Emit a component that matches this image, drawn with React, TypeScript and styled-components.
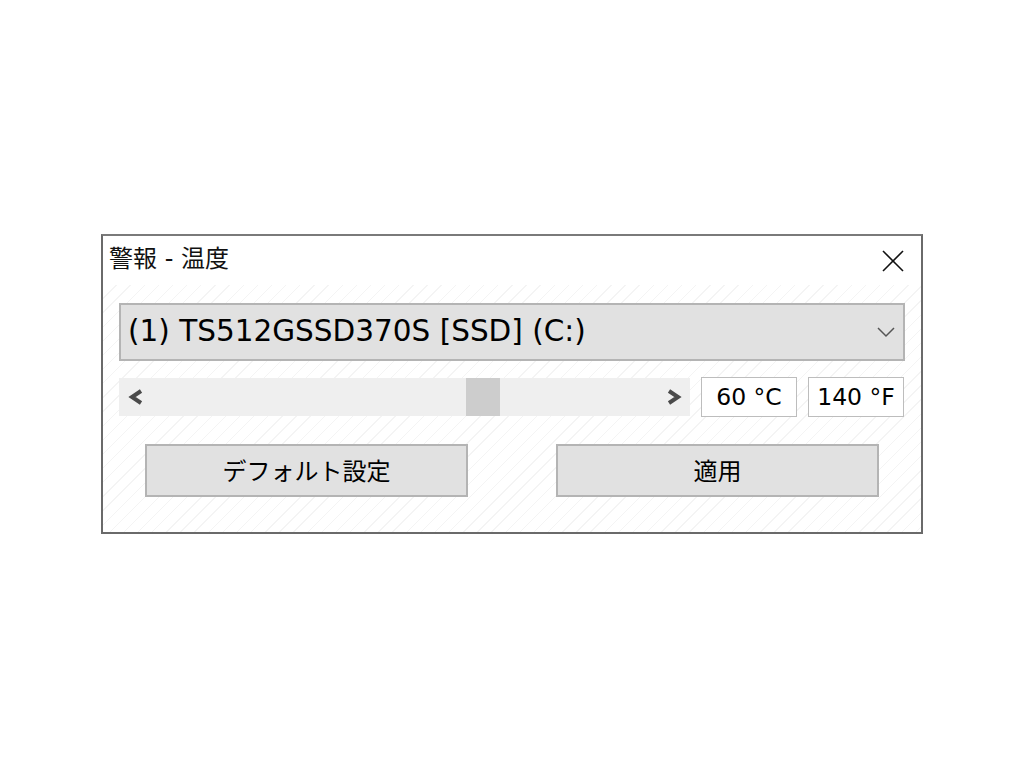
import React from "react";
import styled, { createGlobalStyle } from "styled-components";

const Global = createGlobalStyle`
  html, body { margin: 0; padding: 0; background: #ffffff; }
  body { font-family: "DejaVu Sans", "Noto Sans CJK JP", sans-serif; color: #000; }
`;

const Page = styled.div`
  width: 1024px;
  height: 768px;
  box-sizing: border-box;
  padding: 234px 0 0 101px;
`;

const Window = styled.div`
  width: 822px;
  height: 300px;
  box-sizing: border-box;
  border: 2px solid #6a6a6a;
  border-top-color: #7a7a7a;
  background: #ffffff;
  display: flex;
  flex-direction: column;
`;

const TitleBar = styled.div`
  height: 49px;
  display: flex;
  align-items: center;
  justify-content: space-between;
  padding: 0 16px 4px 6px;
  box-sizing: border-box;
`;

const Title = styled.div`
  font-family: "DejaVu Sans", "Noto Sans CJK JP", sans-serif;
  font-size: 24px;
  line-height: 1;
  color: #111;
`;

const CloseButton = styled.div`
  width: 24px;
  height: 24px;
  display: flex;
  align-items: center;
  justify-content: center;
  margin-top: 4px;
`;

const Client = styled.div`
  flex: 1;
  padding: 18px 16px 0 16px;
  display: flex;
  flex-direction: column;
  background-color: #ffffff;
  background-image: repeating-linear-gradient(
    135deg,
    #ffffff 0px,
    #ffffff 9px,
    #f4f4f4 9px,
    #f4f4f4 10px
  );
`;

const Combo = styled.div`
  height: 58px;
  box-sizing: border-box;
  border: 2px solid #b4b4b4;
  background: #e1e1e1;
  display: flex;
  align-items: center;
  justify-content: space-between;
  padding: 0 8px 0 7px;
`;

const ComboText = styled.span`
  font-family: "DejaVu Sans", sans-serif;
  font-size: 29.5px;
  color: #000;
  line-height: 1;
`;

const SliderRow = styled.div`
  margin-top: 16px;
  display: flex;
  align-items: center;
  gap: 11px;
`;

const Track = styled.div`
  width: 571px;
  height: 38px;
  background: #efefef;
  display: flex;
  align-items: center;
  padding: 0 6px 0 7px;
  box-sizing: border-box;
`;

const TrackSpace = styled.div`
  flex: 1;
  height: 100%;
  display: flex;
  align-items: stretch;
`;

const Thumb = styled.div`
  width: 34px;
  background: #cdcdcd;
`;

const ValueBox = styled.div`
  width: 96px;
  height: 40px;
  box-sizing: border-box;
  border: 1px solid #bdbdbd;
  background: #ffffff;
  display: flex;
  align-items: center;
  justify-content: center;
  font-family: "DejaVu Sans", sans-serif;
  font-size: 23.5px;
  color: #000;
  padding-bottom: 1px;
`;

const ButtonRow = styled.div`
  margin-top: 27px;
  padding: 0 26px;
  display: flex;
  justify-content: space-between;
`;

const Button = styled.div`
  width: 323px;
  height: 53px;
  box-sizing: border-box;
  border: 2px solid #b4b4b4;
  background: #e1e1e1;
  display: flex;
  align-items: center;
  justify-content: center;
  font-family: "Noto Sans CJK JP", sans-serif;
  font-size: 24px;
  color: #000;
  padding-bottom: 2px;
`;

const ArrowIcon = ({ dir }: { dir: "left" | "right" }) => (
  <svg width="20" height="20" viewBox="0 0 20 20">
    <polyline
      points={dir === "left" ? "15,4 6,10 15,16" : "5,4 14,10 5,16"}
      fill="none"
      stroke="#4a4a4a"
      strokeWidth="4"
      strokeLinejoin="miter"
    />
  </svg>
);

export default function App() {
  const thumbOffset = 320;
  return (
    <>
      <Global />
      <Page>
        <Window>
          <TitleBar>
            <Title>警報 - 温度</Title>
            <CloseButton>
              <svg width="22" height="22" viewBox="0 0 22 22">
                <line x1="1" y1="1" x2="21" y2="21" stroke="#111" strokeWidth="1.6" />
                <line x1="21" y1="1" x2="1" y2="21" stroke="#111" strokeWidth="1.6" />
              </svg>
            </CloseButton>
          </TitleBar>
          <Client>
            <Combo>
              <ComboText>(1) TS512GSSD370S [SSD] (C:)</ComboText>
              <svg width="18" height="12" viewBox="0 0 18 12">
                <polyline points="1,2 9,10 17,2" fill="none" stroke="#555" strokeWidth="1.5" />
              </svg>
            </Combo>
            <SliderRow>
              <Track>
                <ArrowIcon dir="left" />
                <TrackSpace>
                  <Thumb style={{ marginLeft: thumbOffset }} />
                </TrackSpace>
                <ArrowIcon dir="right" />
              </Track>
              <ValueBox>60 °C</ValueBox>
              <ValueBox>140 °F</ValueBox>
            </SliderRow>
            <ButtonRow>
              <Button>デフォルト設定</Button>
              <Button>適用</Button>
            </ButtonRow>
          </Client>
        </Window>
      </Page>
    </>
  );
}
